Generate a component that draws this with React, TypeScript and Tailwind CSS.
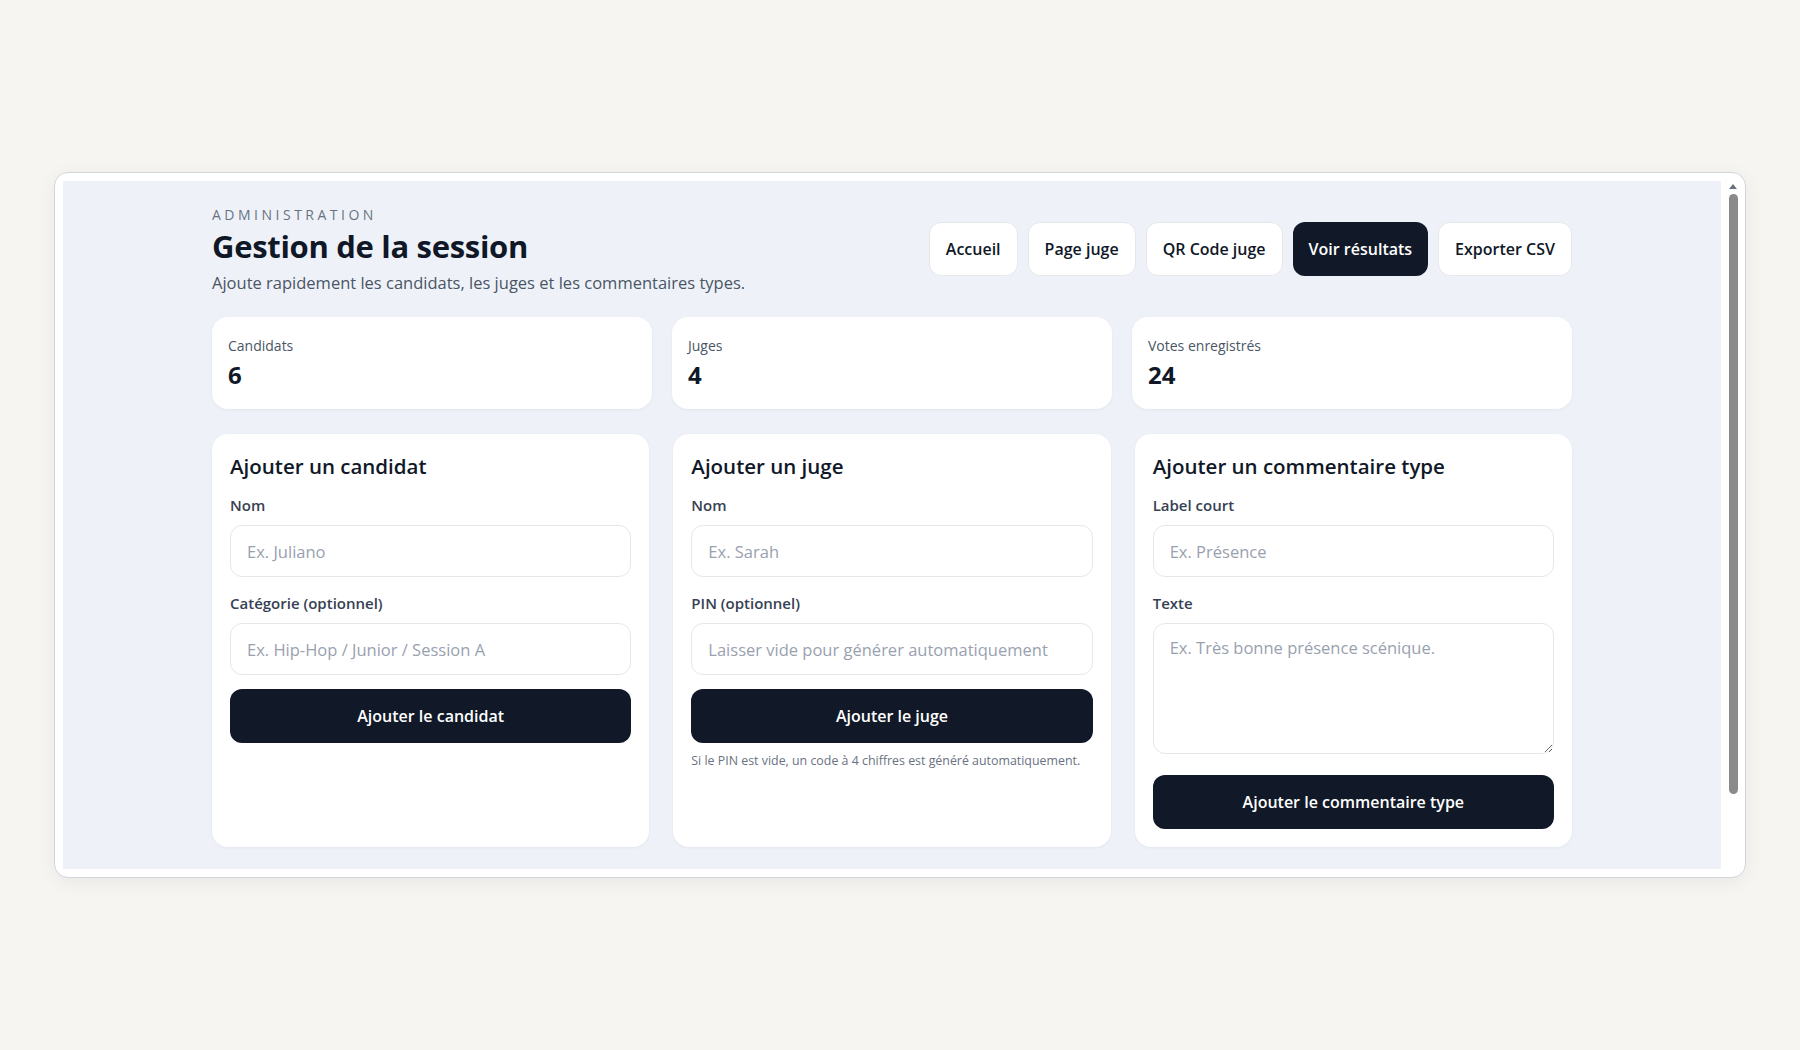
import React from 'react';

const font = { fontFamily: '"Open Sans", "Noto Sans", sans-serif' };

const navButtons = ['Accueil', 'Page juge', 'QR Code juge', 'Voir résultats', 'Exporter CSV'];

const stats = [
  { label: 'Candidats', value: '6' },
  { label: 'Juges', value: '4' },
  { label: 'Votes enregistrés', value: '24' },
];

const Field: React.FC<{ label: string; placeholder: string; first?: boolean }> = ({ label, placeholder, first }) => (
  <div className={first ? 'mt-[15px]' : 'mt-[16px]'}>
    <label className="block text-[15px] leading-5 font-semibold text-gray-700">{label}</label>
    <input
      placeholder={placeholder}
      className="mt-[10px] block w-full h-[52px] rounded-xl border border-gray-200 bg-white px-4 text-[16.5px] text-gray-900 placeholder:text-gray-400 outline-none"
    />
  </div>
);

const PrimaryButton: React.FC<{ children: React.ReactNode; className?: string }> = ({ children, className = '' }) => (
  <button className={`block w-full h-[54px] rounded-xl bg-[#111827] text-white text-[16px] font-semibold ${className}`}>
    {children}
  </button>
);

const App: React.FC = () => {
  return (
    <div className="min-h-screen bg-[#f6f5f2] flex items-center px-[54px]" style={font}>
      {/* Frame */}
      <div className="w-full h-[706px] rounded-[14px] border border-gray-300 bg-white shadow-[0_4px_20px_rgba(0,0,0,0.06)] flex pl-[8px] py-[8px]">
        <div className="flex-1 bg-[#eef2f8] overflow-hidden">
          <div className="max-w-[1360px] mx-auto pt-[24px]">
            {/* Header */}
            <div className="flex items-center justify-between">
              <div>
                <p className="text-[14px] leading-5 tracking-[0.25em] text-gray-500 uppercase">Administration</p>
                <h1 className="mt-[2px] text-[31px] leading-[39px] font-bold text-gray-900 tracking-[-0.01em]">Gestion de la session</h1>
                <p className="mt-[5px] text-[16.5px] leading-6 text-gray-600">
                  Ajoute rapidement les candidats, les juges et les commentaires types.
                </p>
              </div>
              <div className="flex gap-[10px] -mt-[2px]">
                {navButtons.map((b) => (
                  <button
                    key={b}
                    className={`h-[54px] px-[16px] rounded-xl text-[16px] font-semibold ${
                      b === 'Voir résultats'
                        ? 'bg-[#111827] text-white'
                        : 'bg-white text-gray-900 border border-gray-200'
                    }`}
                  >
                    {b}
                  </button>
                ))}
              </div>
            </div>

            {/* Stats */}
            <div className="mt-[22px] grid grid-cols-3 gap-5">
              {stats.map((s) => (
                <div key={s.label} className="bg-white rounded-2xl px-4 pt-[19px] pb-[18px] shadow-[0_1px_3px_rgba(15,23,42,0.05)]">
                  <p className="text-[14px] leading-5 text-gray-600">{s.label}</p>
                  <p className="mt-[3px] text-[24px] leading-8 font-bold text-gray-900">{s.value}</p>
                </div>
              ))}
            </div>

            {/* Forms */}
            <div className="mt-[25px] grid grid-cols-3 gap-6">
              <div className="bg-white rounded-2xl p-[18px] shadow-[0_1px_3px_rgba(15,23,42,0.05)]">
                <h2 className="text-[20.5px] leading-7 font-semibold text-gray-900">Ajouter un candidat</h2>
                <Field label="Nom" placeholder="Ex. Juliano" first />
                <Field label="Catégorie (optionnel)" placeholder="Ex. Hip-Hop / Junior / Session A" />
                <PrimaryButton className="mt-[14px]">Ajouter le candidat</PrimaryButton>
              </div>

              <div className="bg-white rounded-2xl p-[18px] shadow-[0_1px_3px_rgba(15,23,42,0.05)]">
                <h2 className="text-[20.5px] leading-7 font-semibold text-gray-900">Ajouter un juge</h2>
                <Field label="Nom" placeholder="Ex. Sarah" first />
                <Field label="PIN (optionnel)" placeholder="Laisser vide pour générer automatiquement" />
                <PrimaryButton className="mt-[14px]">Ajouter le juge</PrimaryButton>
                <p className="mt-[10px] text-[12.4px] leading-4 text-gray-500">
                  Si le PIN est vide, un code à 4 chiffres est généré automatiquement.
                </p>
              </div>

              <div className="bg-white rounded-2xl p-[18px] shadow-[0_1px_3px_rgba(15,23,42,0.05)]">
                <h2 className="text-[20.5px] leading-7 font-semibold text-gray-900">Ajouter un commentaire type</h2>
                <Field label="Label court" placeholder="Ex. Présence" first />
                <div className="mt-[16px]">
                  <label className="block text-[15px] leading-5 font-semibold text-gray-700">Texte</label>
                  <textarea
                    placeholder="Ex. Très bonne présence scénique."
                    className="mt-[10px] block w-full h-[131px] rounded-xl border border-gray-200 bg-white px-4 py-[12px] text-[16.5px] text-gray-900 placeholder:text-gray-400 outline-none resize-y"
                  />
                </div>
                <PrimaryButton className="mt-[21px]">Ajouter le commentaire type</PrimaryButton>
              </div>
            </div>
          </div>
        </div>

        {/* Scrollbar */}
        <div className="w-[24px] flex flex-col items-center pt-[3px]">
          <div className="w-0 h-0 border-l-[4px] border-r-[4px] border-b-[5px] border-l-transparent border-r-transparent border-b-gray-500" />
          <div className="mt-[5px] w-[9px] h-[600px] rounded-full bg-[#8a8a8a]" />
        </div>
      </div>
    </div>
  );
};

export default App;
